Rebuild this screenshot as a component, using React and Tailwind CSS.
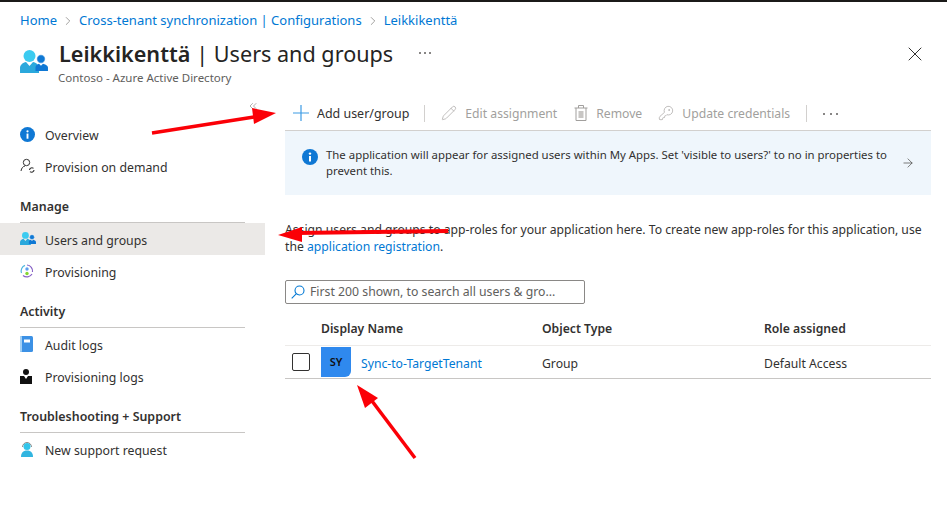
import React from 'react';
import { ChevronRight, X, ChevronsLeft, Pencil, KeyRound, ArrowRight } from 'lucide-react';

const font = "font-['Noto_Sans','Open_Sans',sans-serif]";

function UsersIcon({ size = 28 }) {
  return (
    <svg width={size} height={size * 0.82} viewBox="0 0 28 23">
      <circle cx="9.5" cy="6" r="6" fill="#3ccbf0" />
      <path d="M0 23v-5c0-3 3-5.500 6-6l3.500 4 3.500-4c3 .5 6 3 6 6v5z" fill="#2aa8dc" />
      <circle cx="21" cy="9" r="4.200" fill="#0f78d4" stroke="#fff" strokeWidth=".6" />
      <path d="M15.500 21v-3.500c0-2 2-3.500 3.500-3.700l2 2 2-2c1.500.2 5 1.700 5 3.700V21z" fill="#0f78d4" />
    </svg>
  );
}

function InfoIcon({ color = '#0f78d4', size = 15 }) {
  return (
    <svg width={size} height={size} viewBox="0 0 16 16">
      <circle cx="8" cy="8" r="8" fill={color} />
      <rect x="7" y="7" width="2" height="5.500" fill="#fff" />
      <circle cx="8" cy="4.600" r="1.200" fill="#fff" />
    </svg>
  );
}

function ProvisionDemandIcon() {
  return (
    <svg width="16" height="16" viewBox="0 0 16 16" fill="none" stroke="#333" strokeWidth="1">
      <circle cx="6.500" cy="4.500" r="3.200" />
      <path d="M1 13c.5-3 2-4.600 4-5" />
      <path d="M9.500 12a2.400 2.400 0 0 1 4-1.600M14 12a2.400 2.400 0 0 1-4 1.600" strokeWidth="1.200" />
    </svg>
  );
}

function ProvisioningIcon() {
  return (
    <svg width="14" height="14" viewBox="0 0 14 14" fill="none">
      <path d="M7 1a6 6 0 0 1 5.500 7" stroke="#8661c5" strokeWidth="1.200" />
      <path d="M12 10a6 6 0 0 1-9 1.500" stroke="#8661c5" strokeWidth="1.200" />
      <path d="M1.500 9A6 6 0 0 1 5 1.400" stroke="#50b8e0" strokeWidth="1.200" />
      <circle cx="7" cy="5" r="1.700" fill="#5ea0ef" />
      <circle cx="7" cy="9.500" r="1.700" fill="#86d633" />
    </svg>
  );
}

function BookIcon() {
  return (
    <svg width="13" height="16" viewBox="0 0 13 16">
      <rect width="13" height="16" rx="1.500" fill="#3c91e5" />
      <rect width="2" height="16" rx="1" fill="#a3d0f5" />
      <rect x="4" y="3.500" width="6" height="3" fill="#fff" />
    </svg>
  );
}

function ProvLogIcon() {
  return (
    <svg width="12" height="15" viewBox="0 0 12 15">
      <circle cx="6" cy="3" r="3" fill="#111" />
      <path d="M0 7h4l2 3 2-3h4v8H0z" fill="#111" />
    </svg>
  );
}

function SupportIcon() {
  return (
    <svg width="14" height="16" viewBox="0 0 14 16">
      <path d="M2.500 6a4.500 4.500 0 0 1 9 0" stroke="#888" fill="none" />
      <circle cx="7" cy="5.500" r="3.500" fill="#32c5ea" />
      <path d="M1 16c0-4 2-6.500 6-6.500s6 2.500 6 6.500z" fill="#32b5e0" />
    </svg>
  );
}

function PlusIcon() {
  return (
    <svg width="16" height="16" viewBox="0 0 16 16" stroke="#3d9be4" strokeWidth="1.200">
      <path d="M8 0v16M0 8h16" />
    </svg>
  );
}

function TrashIcon() {
  return (
    <svg width="14" height="16" viewBox="0 0 14 16" fill="none" stroke="#a19f9d">
      <path d="M.5 3h13M4.500 3V.5h5V3M2 3v12.500h10V3" />
      <rect x="4.500" y="6" width="5" height="7" fill="#c8c6c4" stroke="none" />
    </svg>
  );
}

function SearchIcon() {
  return (
    <svg width="14" height="14" viewBox="0 0 14 14" fill="none" stroke="#0078d4" strokeWidth="1.100" className="mr-[5px]">
      <circle cx="8.500" cy="5.500" r="4.500" />
      <path d="M5.200 8.800L.7 13.300" />
    </svg>
  );
}

function Dots({ gap = 'gap-[4px]' }) {
  return (
    <div className={`flex ${gap}`}>
      <span className="w-[2px] h-[2px] rounded-full bg-[#605e5c]" />
      <span className="w-[2px] h-[2px] rounded-full bg-[#605e5c]" />
      <span className="w-[2px] h-[2px] rounded-full bg-[#605e5c]" />
    </div>
  );
}

function NavItem({ icon, label, active }) {
  return (
    <div className={`h-8 flex items-center pl-5 text-[12.3px] text-[#323130] ${active ? 'bg-[#ebe9e7]' : ''}`}>
      <span className="w-[25px] flex items-center shrink-0">{icon}</span>
      <span className="pt-[4px]">{label}</span>
    </div>
  );
}

function NavHeading({ children }) {
  return (
    <div className="mx-5 mt-[17px] pb-[7px] border-b border-[#c8c6c4] text-[12.4px] font-semibold leading-[16px] text-[#323130]">
      {children}
    </div>
  );
}

function ToolItem({ icon, label }) {
  return (
    <div className="flex items-center gap-[8px] text-[12.2px] text-[#a19f9d]">
      {icon}
      <span className="pt-[2px]">{label}</span>
    </div>
  );
}

// red annotation arrows sit on top of the page
function Annotations() {
  return (
    <svg className="absolute inset-0 pointer-events-none" width="947" height="521" viewBox="0 0 947 521">
      <path d="M152 133 L254 117" stroke="#fb0007" strokeWidth="3.500" />
      <polygon points="276,113 252,108 254,124" fill="#fb0007" />
      <path d="M448 231 L296 233" stroke="#fb0007" strokeWidth="4" />
      <polygon points="278,235 302,227 302,242" fill="#fb0007" />
      <path d="M415 458 L372 401" stroke="#fb0007" strokeWidth="3.500" />
      <polygon points="357,385 365,408 378,398" fill="#fb0007" />
    </svg>
  );
}

export default function App() {
  return (
    <div className={`relative w-[947px] h-[521px] overflow-hidden bg-white ${font}`}>
      <div className="h-[2px] bg-[#1b1a19]" />

      {/* breadcrumb */}
      <div className="h-[36px] flex items-center pl-5 pt-[1px] text-[13px] text-[#0078d4]">
        <span>Home</span>
        <ChevronRight className="w-[14px] h-[14px] mx-[4px] text-[#605e5c]" strokeWidth={1} />
        <span>Cross-tenant synchronization | Configurations</span>
        <ChevronRight className="w-[14px] h-[14px] mx-[4px] text-[#605e5c]" strokeWidth={1} />
        <span>Leikkikenttä</span>
      </div>

      {/* title */}
      <div className="h-[59px] flex pl-5 pr-5">
        <div className="w-[39px] pt-[12px] shrink-0"><UsersIcon /></div>
        <div className="flex-1">
          <div className="flex items-center h-[32px] pt-[1px] text-[#252423]">
            <span className="text-[21.6px] font-semibold">Leikkikenttä</span>
            <span className="text-[21.6px] ml-[6px]">| Users and groups</span>
            <div className="ml-[26px] -mt-[3px]"><Dots gap="gap-[3px]" /></div>
          </div>
          <div className="text-[11.5px] leading-[16px] text-[#605e5c] -ml-px">Contoso - Azure Active Directory</div>
        </div>
        <X className="w-[24px] h-[24px] mt-[4px] text-[#323130]" strokeWidth={1} />
      </div>

      <div className="flex">
        {/* sidebar */}
        <div className="w-[265px] shrink-0 relative">
          <ChevronsLeft className="absolute right-[6px] top-[3px] w-3 h-3 text-[#605e5c]" strokeWidth={1} />
          <div className="pt-[21px]">
            <NavItem icon={<InfoIcon />} label="Overview" />
            <NavItem icon={<ProvisionDemandIcon />} label="Provision on demand" />
          </div>
          <NavHeading>Manage</NavHeading>
          <NavItem active icon={<UsersIcon size={16} />} label="Users and groups" />
          <NavItem icon={<ProvisioningIcon />} label="Provisioning" />
          <NavHeading>Activity</NavHeading>
          <NavItem icon={<BookIcon />} label="Audit logs" />
          <NavItem icon={<ProvLogIcon />} label="Provisioning logs" />
          <NavHeading>Troubleshooting + Support</NavHeading>
          <NavItem icon={<SupportIcon />} label="New support request" />
        </div>

        {/* main */}
        <div className="ml-5 w-[646px]">
          <div className="h-[34px] border-b border-[#d2d0ce] flex items-center pl-[8px]">
            <div className="flex items-center gap-[8px] text-[12.45px] text-[#323130]">
              <PlusIcon />
              <span className="pt-[2px]">Add user/group</span>
            </div>
            <div className="w-px h-[17px] bg-[#d2d0ce] ml-[15px] mr-[16px]" />
            <ToolItem icon={<Pencil className="w-[16px] h-[16px]" strokeWidth={1} />} label="Edit assignment" />
            <div className="w-[17px]" />
            <ToolItem icon={<TrashIcon />} label="Remove" />
            <div className="w-[16px]" />
            <ToolItem icon={<KeyRound className="w-[16px] h-[16px]" strokeWidth={1} />} label="Update credentials" />
            <div className="w-px h-[17px] bg-[#d2d0ce] mx-[16px]" />
            <Dots gap="gap-[4.500px]" />
          </div>

          <div className="h-[64px] bg-[#eff6fc] flex pl-[17px] pr-[16px]">
            <div className="pt-[18px] w-[24px] shrink-0"><InfoIcon size={16} /></div>
            <div className="flex-1 pt-[16px] text-[11.4px] leading-[16px] text-[#323130]">
              The application will appear for assigned users within My Apps. Set 'visible to users?' to no in properties to prevent this.
            </div>
            <div className="w-[28px] flex items-center justify-end">
              <ArrowRight className="w-[14px] h-[14px] text-[#484644]" strokeWidth={1.200} />
            </div>
          </div>

          <p className="mt-[26px] text-[12.2px] leading-[17px] text-[#323130]">
            Assign users and groups to app-roles for your application here. To create new app-roles for this application, use the <span className="text-[#0078d4]">application registration</span>.
          </p>

          <div className="mt-[25px] w-[300px] h-[24px] border border-[#8a8886] rounded-[2px] flex items-center pl-[5px] text-[12.25px] text-[#605e5c]">
            <SearchIcon />
            <span>First 200 shown, to search all users &amp; gro...</span>
          </div>

          {/* table */}
          <div className="mt-[12px] grid grid-cols-[36px_221px_222px_1fr] h-[30px] pb-[2px] items-center border-b border-[#edebe9] text-[12.2px] font-semibold text-[#323130]">
            <span />
            <span>Display Name</span>
            <span>Object Type</span>
            <span>Role assigned</span>
          </div>
          <div className="grid grid-cols-[36px_221px_222px_1fr] h-[33px] items-center border-b border-[#c8c6c4] text-[12.2px] text-[#323130]">
            <div className="pl-[7px]"><div className="w-[18px] h-[18px] border border-[#323130] rounded-[2px]" /></div>
            <div className="flex items-center">
              <div className="w-[30px] h-[30px] bg-[#2f89ee] rounded-br-[6px] flex items-center justify-center text-[11px] font-semibold text-[#111]">SY</div>
              <span className="ml-[10px] pt-[5px] text-[#0078d4]">Sync-to-TargetTenant</span>
            </div>
            <span className="pt-[5px]">Group</span>
            <span className="pt-[5px]">Default Access</span>
          </div>
        </div>
      </div>

      <Annotations />
    </div>
  );
}
